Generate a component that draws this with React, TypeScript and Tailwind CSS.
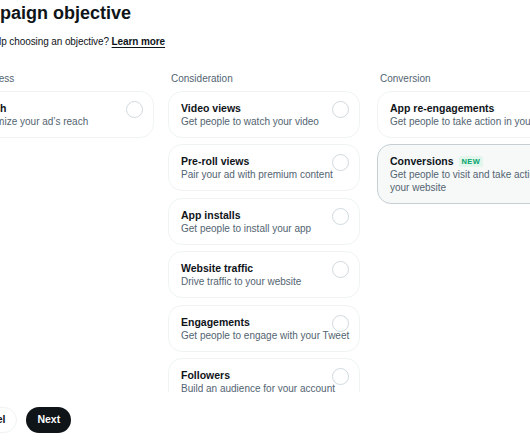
import React from "react";

type Objective = {
  title: string;
  desc: string;
  isNew?: boolean;
  active?: boolean;
};

const columns: { label: string; items: Objective[] }[] = [
  {
    label: "Awareness",
    items: [{ title: "Reach", desc: "Maximize your ad’s reach" }],
  },
  {
    label: "Consideration",
    items: [
      { title: "Video views", desc: "Get people to watch your video" },
      { title: "Pre-roll views", desc: "Pair your ad with premium content" },
      { title: "App installs", desc: "Get people to install your app" },
      { title: "Website traffic", desc: "Drive traffic to your website" },
      { title: "Engagements", desc: "Get people to engage with your Tweet" },
      { title: "Followers", desc: "Build an audience for your account" },
    ],
  },
  {
    label: "Conversion",
    items: [
      { title: "App re-engagements", desc: "Get people to take action in your app" },
      {
        title: "Conversions",
        desc: "Get people to visit and take action on your website",
        isNew: true,
        active: true,
      },
    ],
  },
];

function ObjectiveCard({ item }: { item: Objective }) {
  return (
    <div
      className={`relative rounded-[14px] border pl-[12px] pr-[8px] pt-[9px] pb-[9px] ${
        item.active ? "border-[#c4cfd6] bg-[#f7f9f9]" : "border-[#eff3f4] bg-white"
      }`}
    >
      <div className="flex items-center gap-[5px] text-[10.5px] leading-[14px] font-bold text-[#0f1419]">
        {item.title}
        {item.isNew && (
          <span className="rounded-[2px] bg-[#e3f6eb] px-[3px] text-[7.5px] leading-[11px] font-bold tracking-[0.3px] text-[#00a36a]">
            NEW
          </span>
        )}
      </div>
      <p className="text-[10px] leading-[13px] text-[#536471]">{item.desc}</p>
      {!item.active && (
        <span className="absolute right-[10px] top-[9px] h-[17px] w-[17px] rounded-full border border-[#cfd9de] bg-white/60" />
      )}
    </div>
  );
}

export default function App() {
  return (
    <div
      className="h-[443px] w-[530px] overflow-hidden bg-white"
      style={{ fontFamily: "'Liberation Sans', Arial, sans-serif" }}
    >
      <div className="-ml-[41px] w-[640px]">
        <h1 className="pl-[2px] text-[18px] leading-[26px] font-bold text-[#0f1419]">
          Campaign objective
        </h1>
        <p className="mt-[9px] pl-[3px] text-[10px] leading-[14px] tracking-[-0.1px] text-[#0f1419]">
          Need help choosing an objective?{" "}
          <a className="font-bold underline underline-offset-2">Learn more</a>
        </p>

        <div className="mt-[23px] flex gap-[17px]">
          {columns.map((col, i) => (
            <div
              key={col.label}
              className={`w-[192px] flex-shrink-0 ${i === 0 ? "ml-[3px] mr-[-3px]" : ""}`}
            >
              <div className="pl-[3px] text-[10px] leading-[14px] text-[#536471]">{col.label}</div>
              <div className="mt-[5px] flex h-[301px] flex-col gap-[6.4px] overflow-hidden">
                {col.items.map((item) => (
                  <ObjectiveCard key={item.title} item={item} />
                ))}
              </div>
            </div>
          ))}
        </div>

        <div className="mt-[15px] flex items-center gap-[9px]">
          <button className="h-[26px] rounded-full border border-[#eff3f4] bg-white px-[11px] text-[10.5px] font-bold text-[#0f1419]">
            Cancel
          </button>
          <button className="h-[26px] rounded-full bg-[#0f1419] px-[11px] text-[10.5px] font-bold text-white">
            Next
          </button>
        </div>
      </div>
    </div>
  );
}
